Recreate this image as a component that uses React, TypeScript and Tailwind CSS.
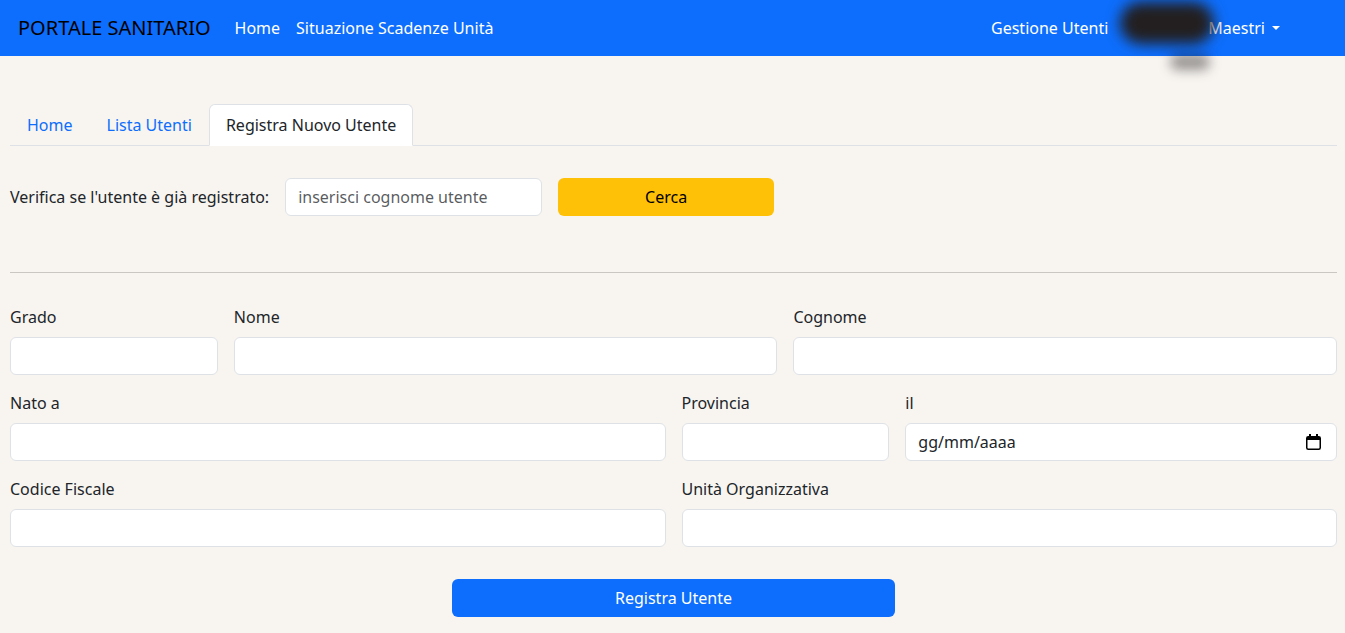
import React from "react";

const inputCls =
  "block w-full h-[38px] rounded-md border border-[#dee2e6] bg-white px-3 text-base text-[#212529] outline-none";

function Field({ label, span, children }: { label: string; span: string; children?: React.ReactNode }) {
  return (
    <div className={span}>
      <label className="block mb-2 text-base leading-6 text-[#212529]">{label}</label>
      {children ?? <input type="text" className={inputCls} />}
    </div>
  );
}

function CalendarIcon() {
  return (
    <svg width="15" height="16" viewBox="0 0 15 16" className="text-black">
      <rect x="3" y="0" width="2" height="3" fill="currentColor" />
      <rect x="10" y="0" width="2" height="3" fill="currentColor" />
      <rect x="0.75" y="2.75" width="13.5" height="12.5" rx="1.5" fill="none" stroke="currentColor" strokeWidth="1.5" />
      <rect x="1" y="3" width="13" height="3" fill="currentColor" />
    </svg>
  );
}

export default function App() {
  return (
    <div className="min-h-[633px] bg-[#f8f5f1] font-['Noto_Sans',sans-serif] text-[#212529]">
      {/* navbar */}
      <nav className="h-14 bg-[#0d6efd] flex items-center pl-[18px] pr-[57px]">
        <span className="text-xl text-black mr-4">PORTALE SANITARIO</span>
        <a className="px-2 text-white">Home</a>
        <a className="px-2 text-white">Situazione Scadenze Unità</a>
        <div className="ml-auto flex items-center">
          <a className="px-2 text-white">Gestione Utenti</a>
          <a className="px-2 text-white flex items-center">
            {/* blurred name */}
            <span className="relative inline-block w-[78px] h-6">
              <span className="absolute left-[-4px] top-[-14px] w-[94px] h-[42px] rounded-full bg-[#231f20] blur-[7px]" />
              <span className="absolute left-[46px] top-[38px] w-[40px] h-[16px] rounded-full bg-[#231f20]/45 blur-[6px]" />
            </span>
            <span className="ml-[6px]">Maestri</span>
            <span className="ml-[7px] w-0 h-0 border-x-[4px] border-x-transparent border-t-[4px] border-t-white" />
          </a>
        </div>
      </nav>

      <main className="pl-[10px] pr-2">
        {/* tabs */}
        <div className="mt-12 flex border-b border-[#dee2e6]">
          <a className="-mb-px px-4 py-2 leading-6 border border-transparent text-[#0d6efd]">Home</a>
          <a className="-mb-px px-4 py-2 leading-6 border border-transparent text-[#0d6efd]">Lista Utenti</a>
          <a className="-mb-px px-4 py-2 leading-6 bg-white border border-[#dee2e6] border-b-white rounded-t-md text-[#212529]">
            Registra Nuovo Utente
          </a>
        </div>

        {/* search */}
        <div className="mt-8 flex items-center">
          <span className="mr-4">Verifica se l'utente è già registrato:</span>
          <input
            type="text"
            placeholder="inserisci cognome utente"
            className="block w-[257px] h-[38px] rounded-md border border-[#dee2e6] bg-white px-3 text-base text-[#212529] outline-none placeholder:text-[#212529]/75"
          />
          <button className="ml-4 w-[216px] h-[38px] rounded-md bg-[#ffc107] text-black">Cerca</button>
        </div>

        <hr className="mt-[56px] border-0 border-t border-[#cac7c3]" />

        {/* form */}
        <div className="mt-8 grid grid-cols-12 gap-x-4 gap-y-4">
          <Field label="Grado" span="col-span-2" />
          <Field label="Nome" span="col-span-5" />
          <Field label="Cognome" span="col-span-5" />

          <Field label="Nato a" span="col-span-6" />
          <Field label="Provincia" span="col-span-2" />
          <Field label="il" span="col-span-4">
            <div className={inputCls + " flex items-center justify-between pr-[15px]"}>
              <span>gg/mm/aaaa</span>
              <CalendarIcon />
            </div>
          </Field>

          <Field label="Codice Fiscale" span="col-span-6" />
          <Field label="Unità Organizzativa" span="col-span-6" />
        </div>

        <div className="mt-8 flex justify-center">
          <button className="w-[443px] h-[38px] rounded-md bg-[#0d6efd] text-white">Registra Utente</button>
        </div>
      </main>
    </div>
  );
}
